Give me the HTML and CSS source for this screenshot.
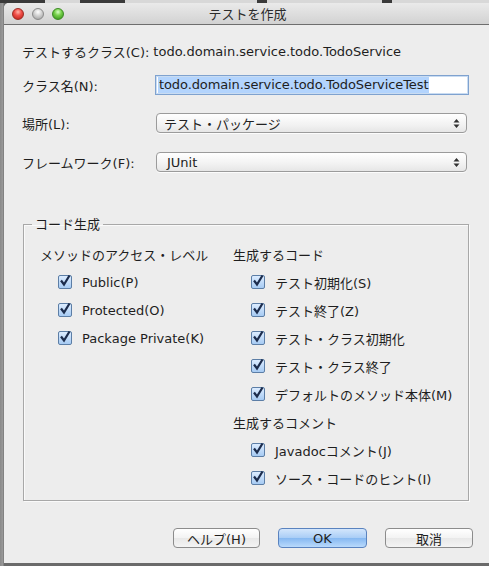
FILE: index.html
```html
<!DOCTYPE html>
<html lang="ja">
<head>
<meta charset="utf-8">
<link rel="stylesheet" href="styles.css">
</head>
<body>
<div class="desk">
  <div class="tabs"><span class="tab t1"></span><span class="tab t2"></span><span class="tab t3"></span><span class="tab t4"></span></div>
  <div class="window">
    <div class="titlebar">
      <div class="lights"><span class="light red"></span><span class="light gray"></span><span class="light green"></span></div>
      <div class="title">テストを作成</div>
    </div>
    <div class="content">
      <div class="row r1"><span class="label">テストするクラス(C):</span><span class="value">todo.domain.service.todo.TodoService</span></div>
      <div class="row r2"><span class="label">クラス名(N):</span><div class="field"><span class="sel">todo.domain.service.todo.TodoServiceTest</span></div></div>
      <div class="row r3"><span class="label">場所(L):</span><div class="select"><span class="stext">テスト・パッケージ</span><svg class="arrows" width="7" height="11" viewBox="0 0 7 11"><path d="M3.5 1 L6.5 4.5 L0.5 4.5 Z M3.5 10 L6.5 6.5 L0.5 6.5 Z" fill="#333"/></svg></div></div>
      <div class="row r4"><span class="label">フレームワーク(F):</span><div class="select"><span class="stext junit">JUnit</span><svg class="arrows" width="7" height="11" viewBox="0 0 7 11"><path d="M3.5 1 L6.5 4.5 L0.5 4.5 Z M3.5 10 L6.5 6.5 L0.5 6.5 Z" fill="#333"/></svg></div></div>
      <fieldset class="group">
        <legend>コード生成</legend>
        <div class="cols">
          <div class="col left">
            <div class="head">メソッドのアクセス・レベル</div>
            <div class="cb"><span class="box"><svg width="14" height="14" viewBox="0 0 14 14"><path d="M3 6.5 L6 10.5 L11.5 1.5" fill="none" stroke="#1c2c4c" stroke-width="2.2"/></svg></span>Public(P)</div>
            <div class="cb"><span class="box"><svg width="14" height="14" viewBox="0 0 14 14"><path d="M3 6.5 L6 10.5 L11.5 1.5" fill="none" stroke="#1c2c4c" stroke-width="2.2"/></svg></span>Protected(O)</div>
            <div class="cb"><span class="box"><svg width="14" height="14" viewBox="0 0 14 14"><path d="M3 6.5 L6 10.5 L11.5 1.5" fill="none" stroke="#1c2c4c" stroke-width="2.2"/></svg></span>Package Private(K)</div>
          </div>
          <div class="col right">
            <div class="head">生成するコード</div>
            <div class="cb"><span class="box"><svg width="14" height="14" viewBox="0 0 14 14"><path d="M3 6.5 L6 10.5 L11.5 1.5" fill="none" stroke="#1c2c4c" stroke-width="2.2"/></svg></span>テスト初期化(S)</div>
            <div class="cb"><span class="box"><svg width="14" height="14" viewBox="0 0 14 14"><path d="M3 6.5 L6 10.5 L11.5 1.5" fill="none" stroke="#1c2c4c" stroke-width="2.2"/></svg></span>テスト終了(Z)</div>
            <div class="cb"><span class="box"><svg width="14" height="14" viewBox="0 0 14 14"><path d="M3 6.5 L6 10.5 L11.5 1.5" fill="none" stroke="#1c2c4c" stroke-width="2.2"/></svg></span>テスト・クラス初期化</div>
            <div class="cb"><span class="box"><svg width="14" height="14" viewBox="0 0 14 14"><path d="M3 6.5 L6 10.5 L11.5 1.5" fill="none" stroke="#1c2c4c" stroke-width="2.2"/></svg></span>テスト・クラス終了</div>
            <div class="cb"><span class="box"><svg width="14" height="14" viewBox="0 0 14 14"><path d="M3 6.5 L6 10.5 L11.5 1.5" fill="none" stroke="#1c2c4c" stroke-width="2.2"/></svg></span>デフォルトのメソッド本体(M)</div>
            <div class="head sub">生成するコメント</div>
            <div class="cb"><span class="box"><svg width="14" height="14" viewBox="0 0 14 14"><path d="M3 6.5 L6 10.5 L11.5 1.5" fill="none" stroke="#1c2c4c" stroke-width="2.2"/></svg></span>Javadocコメント(J)</div>
            <div class="cb"><span class="box"><svg width="14" height="14" viewBox="0 0 14 14"><path d="M3 6.5 L6 10.5 L11.5 1.5" fill="none" stroke="#1c2c4c" stroke-width="2.2"/></svg></span>ソース・コードのヒント(I)</div>
          </div>
        </div>
      </fieldset>
      <div class="buttons">
        <button class="btn help">ヘルプ(H)</button>
        <button class="btn ok">OK</button>
        <button class="btn">取消</button>
      </div>
    </div>
  </div>
</div>
</body>
</html>
```
FILE: styles.css
```css
html, body {
  margin: 0;
  padding: 0;
}
body {
  width: 489px;
  height: 566px;
  overflow: hidden;
  background: #2a2a2a;
  font-family: "DejaVu Sans", "Noto Sans CJK JP", sans-serif;
  font-size: 13px;
  color: #1e1e1e;
}
.desk {
  position: relative;
  width: 489px;
  height: 566px;
  background: linear-gradient(to right, #8a8a8a 0, #9a9a9a 3px, #6a6a6a 4px);
}
.tabs {
  height: 3px;
  display: flex;
  background: #3a3a3a;
}
.tab { height: 3px; background: #d8d8d8; }
.t1 { width: 40px; margin-left: 45px; }
.t2 { width: 150px; margin-left: 45px; }
.t3 { width: 130px; margin-left: 10px; }
.t4 { width: 110px; margin-left: 10px; }
.window {
  margin-left: 4px;
  width: 485px;
  height: 560px;
  background: #ededed;
  border-radius: 5px 0 0 0;
  overflow: hidden;
}
.titlebar {
  position: relative;
  height: 21px;
  background: linear-gradient(#eaeaea, #d2d2d2);
  border-bottom: 1px solid #6e6e6e;
  display: flex;
  align-items: center;
  justify-content: center;
}
.lights {
  position: absolute;
  left: 8px;
  top: 5px;
  display: flex;
  gap: 8px;
}
.light {
  width: 12px;
  height: 12px;
  border-radius: 50%;
  box-sizing: border-box;
}
.red { background: radial-gradient(circle at 50% 30%, #ffb3a8 0, #f0504a 40%, #b81c14 100%); border: 1px solid #9c2a22; }
.gray { background: radial-gradient(circle at 50% 30%, #ffffff 0, #d0d0d0 45%, #9a9a9a 100%); border: 1px solid #8a8a8a; }
.green { background: radial-gradient(circle at 50% 30%, #d8ffc8 0, #76d04a 40%, #2f8d17 100%); border: 1px solid #3a8a22; }
.title {
  font-family: "Noto Sans CJK JP", sans-serif;
  font-size: 13px;
  color: #2b2b2b;
  margin-left: 2px;
}
.content {
  padding: 16px 0 0 18px;
}
.row {
  display: flex;
  align-items: center;
  height: 20px;
}
.label {
  width: 133px;
  flex: none;
  font-family: "DejaVu Sans", "Noto Sans CJK JP", sans-serif;
}
.r1 .label { width: auto; margin-right: 4px; }
.r2 { margin-top: 14px; }
.r3 { margin-top: 18px; }
.r4 { margin-top: 19px; }
.field {
  width: 314px;
  height: 20px;
  box-sizing: border-box;
  border: 1px solid #7fa2cf;
  box-shadow: inset 0 0 0 1px #c9dcf2;
  background: #fff;
  display: flex;
  align-items: center;
  padding-left: 2px;
}
.sel {
  background: #b3d4fd;
  padding: 0 1px;
  line-height: 16px;
  letter-spacing: -0.1px;
}
.select {
  margin-left: 1px;
  width: 311px;
  height: 20px;
  box-sizing: border-box;
  border: 1px solid #9b9b9b;
  border-radius: 4px;
  background: linear-gradient(#ffffff, #f2f2f2 60%, #e6e6e6);
  box-shadow: 0 1px 0 rgba(255,255,255,0.8);
  display: flex;
  align-items: center;
  justify-content: space-between;
  padding: 0 6px 0 7px;
}
.stext { font-family: "Noto Sans CJK JP", sans-serif; color: #222; }
.stext.junit { font-family: "DejaVu Sans", sans-serif; padding-left: 3px; }
.group {
  margin: 44px 0 0 1px;
  width: 446px;
  height: 285px;
  box-sizing: border-box;
  border: 1px solid #a8a8a8;
  box-shadow: inset 1px 1px 0 #fafafa, 1px 1px 0 #fafafa;
  padding: 0;
  position: relative;
}
.group legend {
  margin-left: 8px;
  padding: 0 3px;
  font-family: "Noto Sans CJK JP", sans-serif;
  line-height: 16px;
}
.cols {
  display: flex;
  padding: 13px 0 0 16px;
}
.col.left { width: 193px; }
.head {
  height: 20px;
  line-height: 20px;
  font-family: "Noto Sans CJK JP", sans-serif;
}
.head.sub { margin-top: 9px; }
.cb {
  height: 20px;
  margin-top: 8px;
  display: flex;
  align-items: center;
  padding-left: 18px;
  font-family: "DejaVu Sans", "Noto Sans CJK JP", sans-serif;
}
.head + .cb { margin-top: 7px; }
.right .cb { padding-left: 18px; }
.box {
  width: 14px;
  height: 14px;
  box-sizing: border-box;
  border: 1px solid #5c7ea6;
  border-radius: 2px;
  background: linear-gradient(#dcecff, #a7cbf3);
  margin-right: 10px;
  position: relative;
  flex: none;
}
.box svg { position: absolute; left: -1px; top: -2px; }
.buttons {
  display: flex;
  gap: 18px;
  margin: 27px 0 0 151px;
}
.btn {
  width: 88px;
  height: 20px;
  box-sizing: border-box;
  border: 1px solid #8c8c8c;
  border-radius: 4px;
  background: linear-gradient(#ffffff, #f3f3f3 50%, #e8e8e8 51%, #f4f4f4);
  font-family: "DejaVu Sans", "Noto Sans CJK JP", sans-serif;
  font-size: 13px;
  color: #1e1e1e;
  padding: 0;
}
.btn.help { width: 87px; }
.btn.ok {
  width: 89px;
  border-color: #5a83bf;
  background: linear-gradient(#d3e6fc, #a9cdf6 50%, #86b8f1 51%, #b9dafc);
}
```
